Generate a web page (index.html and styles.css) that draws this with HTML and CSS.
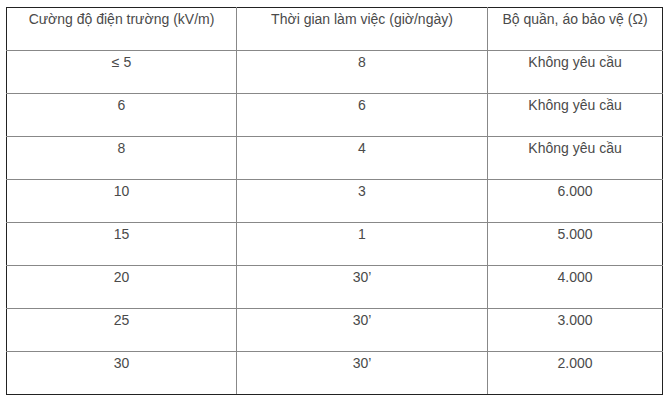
FILE: index.html
```html
<!DOCTYPE html>
<html lang="vi">
<head>
<meta charset="utf-8">
<link rel="stylesheet" href="styles.css">
</head>
<body>
<table class="tbl">
  <colgroup>
    <col class="c1"><col class="c2"><col class="c3">
  </colgroup>
  <tr><td>Cường độ điện trường (kV/m)</td><td>Thời gian làm việc (giờ/ngày)</td><td>Bộ quần, áo bảo vệ (Ω)</td></tr>
  <tr><td>≤ 5</td><td>8</td><td>Không yêu cầu</td></tr>
  <tr><td>6</td><td>6</td><td>Không yêu cầu</td></tr>
  <tr><td>8</td><td>4</td><td>Không yêu cầu</td></tr>
  <tr><td>10</td><td>3</td><td>6.000</td></tr>
  <tr><td>15</td><td>1</td><td>5.000</td></tr>
  <tr><td>20</td><td>30’</td><td>4.000</td></tr>
  <tr><td>25</td><td>30’</td><td>3.000</td></tr>
  <tr><td>30</td><td>30’</td><td>2.000</td></tr>
</table>
</body>
</html>
```
FILE: styles.css
```css
html, body { margin: 0; padding: 0; background: #fff; }
body { padding: 7px 0 0 6px; }
.tbl {
  border-collapse: collapse;
  table-layout: fixed;
  width: 656px;
  font-family: "Liberation Sans", Arial, sans-serif;
  font-size: 14px;
  color: #4a4a4a;
}
.c1 { width: 230px; }
.c2 { width: 251px; }
.c3 { width: 175px; }
.tbl td {
  border: 1px solid #888;
  height: 43px;
  padding: 3px 0 0;
  box-sizing: border-box;
  vertical-align: top;
  text-align: center;
  line-height: 16px;
}
.tbl tr:first-child td { border-top-color: #222; }
.tbl tr:last-child td { border-bottom-color: #222; }
.tbl td:first-child { border-left-color: #222; }
.tbl td:last-child { border-right-color: #222; }
```
